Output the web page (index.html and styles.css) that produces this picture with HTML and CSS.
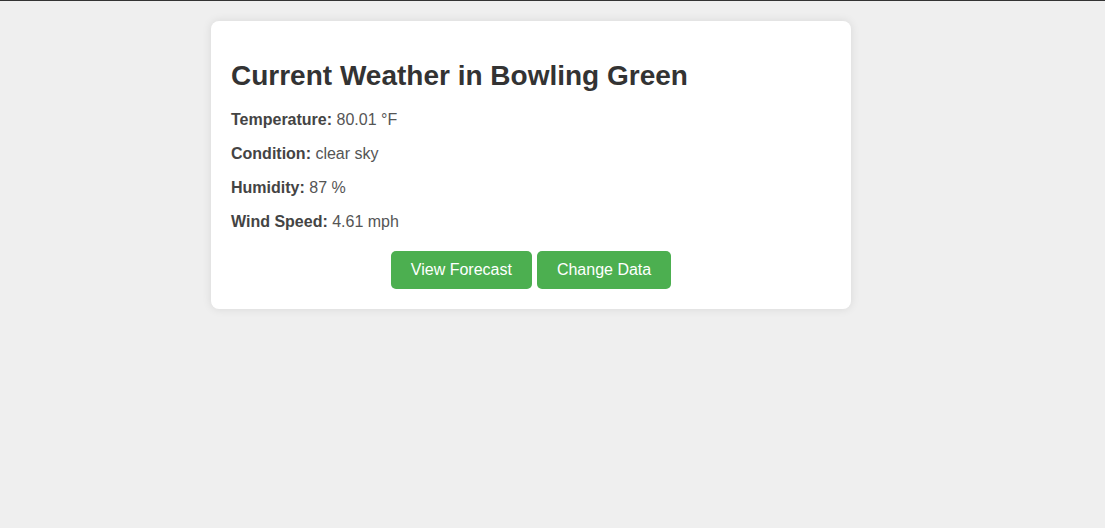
FILE: index.html
```html
<!DOCTYPE html>
<html>
<head>
<meta charset="utf-8">
<link rel="stylesheet" href="styles.css">
</head>
<body>
<div class="card">
  <h1 class="title">Current Weather in Bowling Green</h1>
  <p class="row"><strong class="label">Temperature:</strong> 80.01 °F</p>
  <p class="row"><strong class="label">Condition:</strong> clear sky</p>
  <p class="row"><strong class="label">Humidity:</strong> 87 %</p>
  <p class="row"><strong class="label">Wind Speed:</strong> 4.61 mph</p>
  <div class="actions">
    <button class="btn">View Forecast</button>
    <button class="btn">Change Data</button>
  </div>
</div>
</body>
</html>
```
FILE: styles.css
```css
html, body {
  margin: 0;
  padding: 0;
}
body {
  background: #efefef;
  border-top: 1px solid #333;
  font-family: "Liberation Sans", Arial, sans-serif;
  min-height: 527px;
}
.card {
  width: 600px;
  margin: 20px 0 0 211px;
  padding: 20px;
  background: #fff;
  border-radius: 8px;
  box-shadow: 0 0 10px rgba(0, 0, 0, 0.1);
}
.title {
  font-size: 28px;
  color: #333;
  margin: 0.67em 0;
}
.row {
  font-size: 16px;
  color: #555;
  margin: 16px 0;
}
.label {
  color: #444;
}
.actions {
  margin-top: 20px;
  display: flex;
  justify-content: center;
  gap: 5px;
}
.btn {
  font-family: "Liberation Sans", Arial, sans-serif;
  font-size: 16px;
  line-height: 18px;
  color: #fff;
  background: #4caf50;
  border: none;
  border-radius: 5px;
  padding: 10px 20px;
}
```
